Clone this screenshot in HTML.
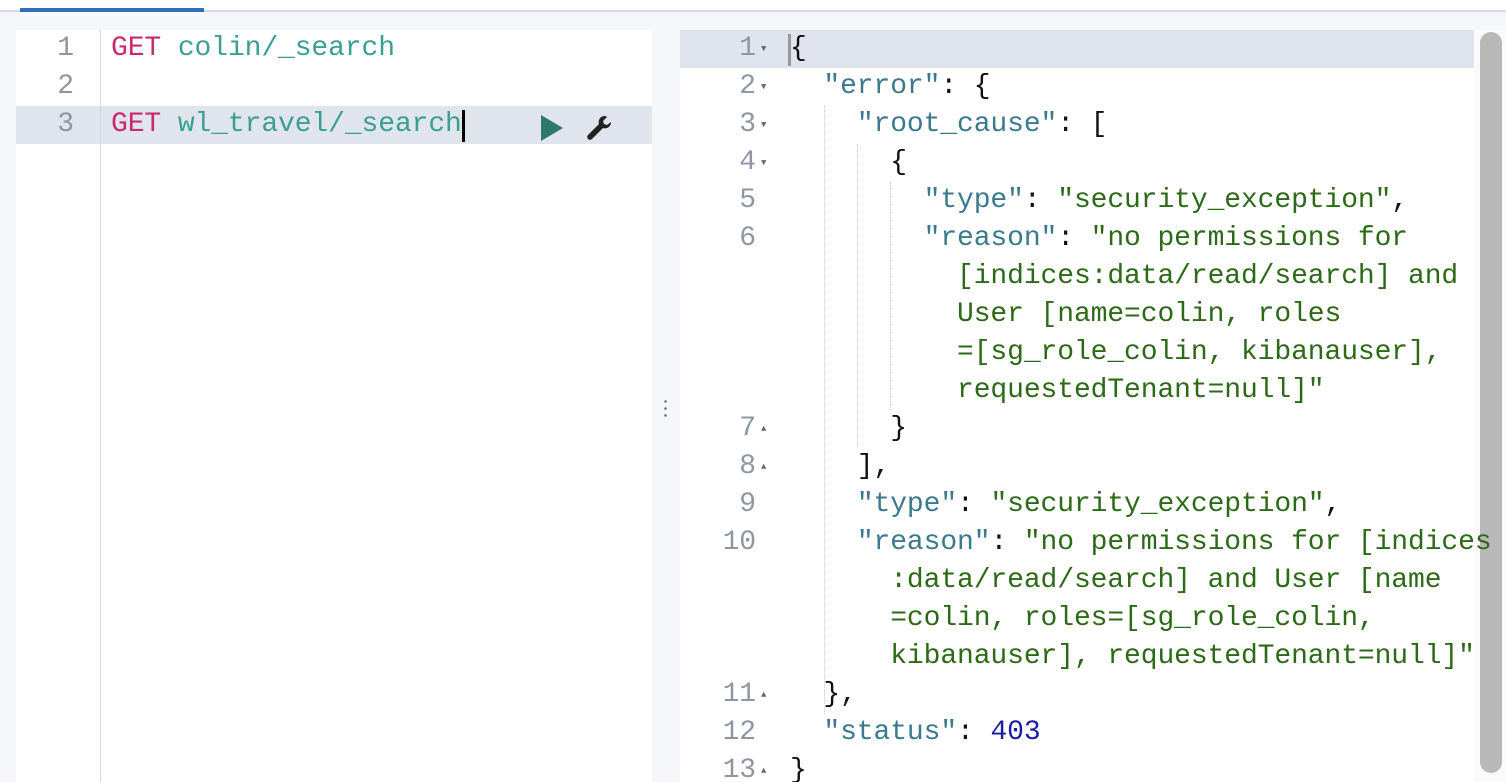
<!DOCTYPE html>
<html><head><meta charset="utf-8"><style>
*{margin:0;padding:0;box-sizing:border-box}
body{width:1506px;height:782px;overflow:hidden;background:#f5f7fa;position:relative;font-family:"Liberation Mono",monospace;font-size:28px}
.top{position:absolute;left:0;top:0;width:1506px;height:12px;background:#fff;border-bottom:2px solid #d3dae6}
.tab{position:absolute;left:20px;top:8px;width:184px;height:4px;background:#2e6fb5}
.panel{position:absolute;top:30px;bottom:0;background:#fff;overflow:hidden}
.ln{position:absolute;height:38px;line-height:38px;white-space:pre;letter-spacing:-0.1px}
.num{color:#8f96a3;text-align:right}
.k{color:#c8296f}.p{color:#3a9e93}.key{color:#3a7a8c}.s{color:#2c6a17}.n{color:#1a1aa6}.b{color:#111}
.arr{position:absolute;font-size:9px;color:#666}
.g{position:absolute;border-left:1px dotted #ccc}
</style></head><body>
<div class="top"></div><div class="tab"></div>

<div class="panel" style="left:16px;width:636px">
 <div style="position:absolute;left:0;top:76px;width:636px;height:38px;background:#e0e4ec"></div>
 <div style="position:absolute;left:84px;top:0;bottom:0;width:1px;background:#d3dae6"></div>
 <div class="ln num" style="left:0;width:58px;top:0">1</div>
 <div class="ln num" style="left:0;width:58px;top:38px">2</div>
 <div class="ln num" style="left:0;width:58px;top:76px">3</div>
 <div class="ln" style="left:95px;top:0"><span class="k">GET</span> <span class="p">colin/_search</span></div>
 <div class="ln" style="left:95px;top:76px"><span class="k">GET</span> <span class="p">wl_travel/_search</span></div>
 <div style="position:absolute;left:446px;top:80px;width:3px;height:32px;background:#000"></div>
 <svg style="position:absolute;left:525px;top:85px" width="22" height="26"><path d="M0 0L22 13L0 26Z" fill="#2d7a6a"/></svg>
 <svg style="position:absolute;left:569px;top:84px" width="28" height="28" viewBox="0 0 28 28"><path d="M20 2a6 6 0 0 0-6 8L3 21a2.5 2.5 0 0 0 4 4l11-11a6 6 0 0 0 8-6l-4 3-3-1-1-3 4-4a6 6 0 0 0-2-1z" fill="#222"/></svg>
</div>

<div style="position:absolute;left:664px;top:398px;width:3px;height:20px;background:radial-gradient(circle,#666 1px,transparent 1.5px) 0 0/3px 7px"></div>

<div class="panel" style="left:680px;width:826px">
 <div style="position:absolute;left:0;top:0;width:798px;height:38px;background:#e0e4ec"></div>
 <div style="position:absolute;left:108px;top:4px;width:3px;height:32px;background:#999"></div>
 <div style="position:absolute;left:794px;top:0;bottom:0;width:32px;background:#fafafa"></div>
 <div style="position:absolute;left:800px;top:2px;width:22px;height:741px;border-radius:11px;background:#b8b8b8"></div>
 <div class="g" style="left:144px;top:76px;height:608px"></div>
 <div class="g" style="left:177px;top:114px;height:304px"></div>
 <div class="g" style="left:210px;top:152px;height:228px"></div>
 <div class="ln b" style="left:110px;top:0">{</div>
 <div class="ln" style="left:110px;top:38px">  <span class="key">"error"</span><span class="b">: {</span></div>
 <div class="ln" style="left:110px;top:76px">    <span class="key">"root_cause"</span><span class="b">: [</span></div>
 <div class="ln b" style="left:110px;top:114px">      {</div>
 <div class="ln" style="left:110px;top:152px">        <span class="key">"type"</span><span class="b">: </span><span class="s">"security_exception"</span><span class="b">,</span></div>
 <div class="ln" style="left:110px;top:190px">        <span class="key">"reason"</span><span class="b">: </span><span class="s">"no permissions for</span></div>
 <div class="ln s" style="left:110px;top:228px">          [indices:data/read/search] and</div>
 <div class="ln s" style="left:110px;top:266px">          User [name=colin, roles</div>
 <div class="ln s" style="left:110px;top:304px">          =[sg_role_colin, kibanauser],</div>
 <div class="ln s" style="left:110px;top:342px">          requestedTenant=null]"</div>
 <div class="ln b" style="left:110px;top:380px">      }</div>
 <div class="ln b" style="left:110px;top:418px">    ],</div>
 <div class="ln" style="left:110px;top:456px">    <span class="key">"type"</span><span class="b">: </span><span class="s">"security_exception"</span><span class="b">,</span></div>
 <div class="ln" style="left:110px;top:494px">    <span class="key">"reason"</span><span class="b">: </span><span class="s">"no permissions for [indices</span></div>
 <div class="ln s" style="left:110px;top:532px">      :data/read/search] and User [name</div>
 <div class="ln s" style="left:110px;top:570px">      =colin, roles=[sg_role_colin,</div>
 <div class="ln s" style="left:110px;top:608px">      kibanauser], requestedTenant=null]"</div>
 <div class="ln b" style="left:110px;top:646px">  },</div>
 <div class="ln" style="left:110px;top:684px">  <span class="key">"status"</span><span class="b">: </span><span class="n">403</span></div>
 <div class="ln b" style="left:110px;top:722px">}</div>

 <div class="ln num" style="left:0;width:76px;top:0">1</div><div class="arr" style="left:81px;top:14px">▼</div>
 <div class="ln num" style="left:0;width:76px;top:38px">2</div><div class="arr" style="left:81px;top:52px">▼</div>
 <div class="ln num" style="left:0;width:76px;top:76px">3</div><div class="arr" style="left:81px;top:90px">▼</div>
 <div class="ln num" style="left:0;width:76px;top:114px">4</div><div class="arr" style="left:81px;top:128px">▼</div>
 <div class="ln num" style="left:0;width:76px;top:152px">5</div>
 <div class="ln num" style="left:0;width:76px;top:190px">6</div>
 <div class="ln num" style="left:0;width:76px;top:380px">7</div><div class="arr" style="left:81px;top:394px">▲</div>
 <div class="ln num" style="left:0;width:76px;top:418px">8</div><div class="arr" style="left:81px;top:432px">▲</div>
 <div class="ln num" style="left:0;width:76px;top:456px">9</div>
 <div class="ln num" style="left:0;width:76px;top:494px">10</div>
 <div class="ln num" style="left:0;width:76px;top:646px">11</div><div class="arr" style="left:81px;top:660px">▲</div>
 <div class="ln num" style="left:0;width:76px;top:684px">12</div>
 <div class="ln num" style="left:0;width:76px;top:722px">13</div><div class="arr" style="left:81px;top:736px">▲</div>
</div>
</body></html>
